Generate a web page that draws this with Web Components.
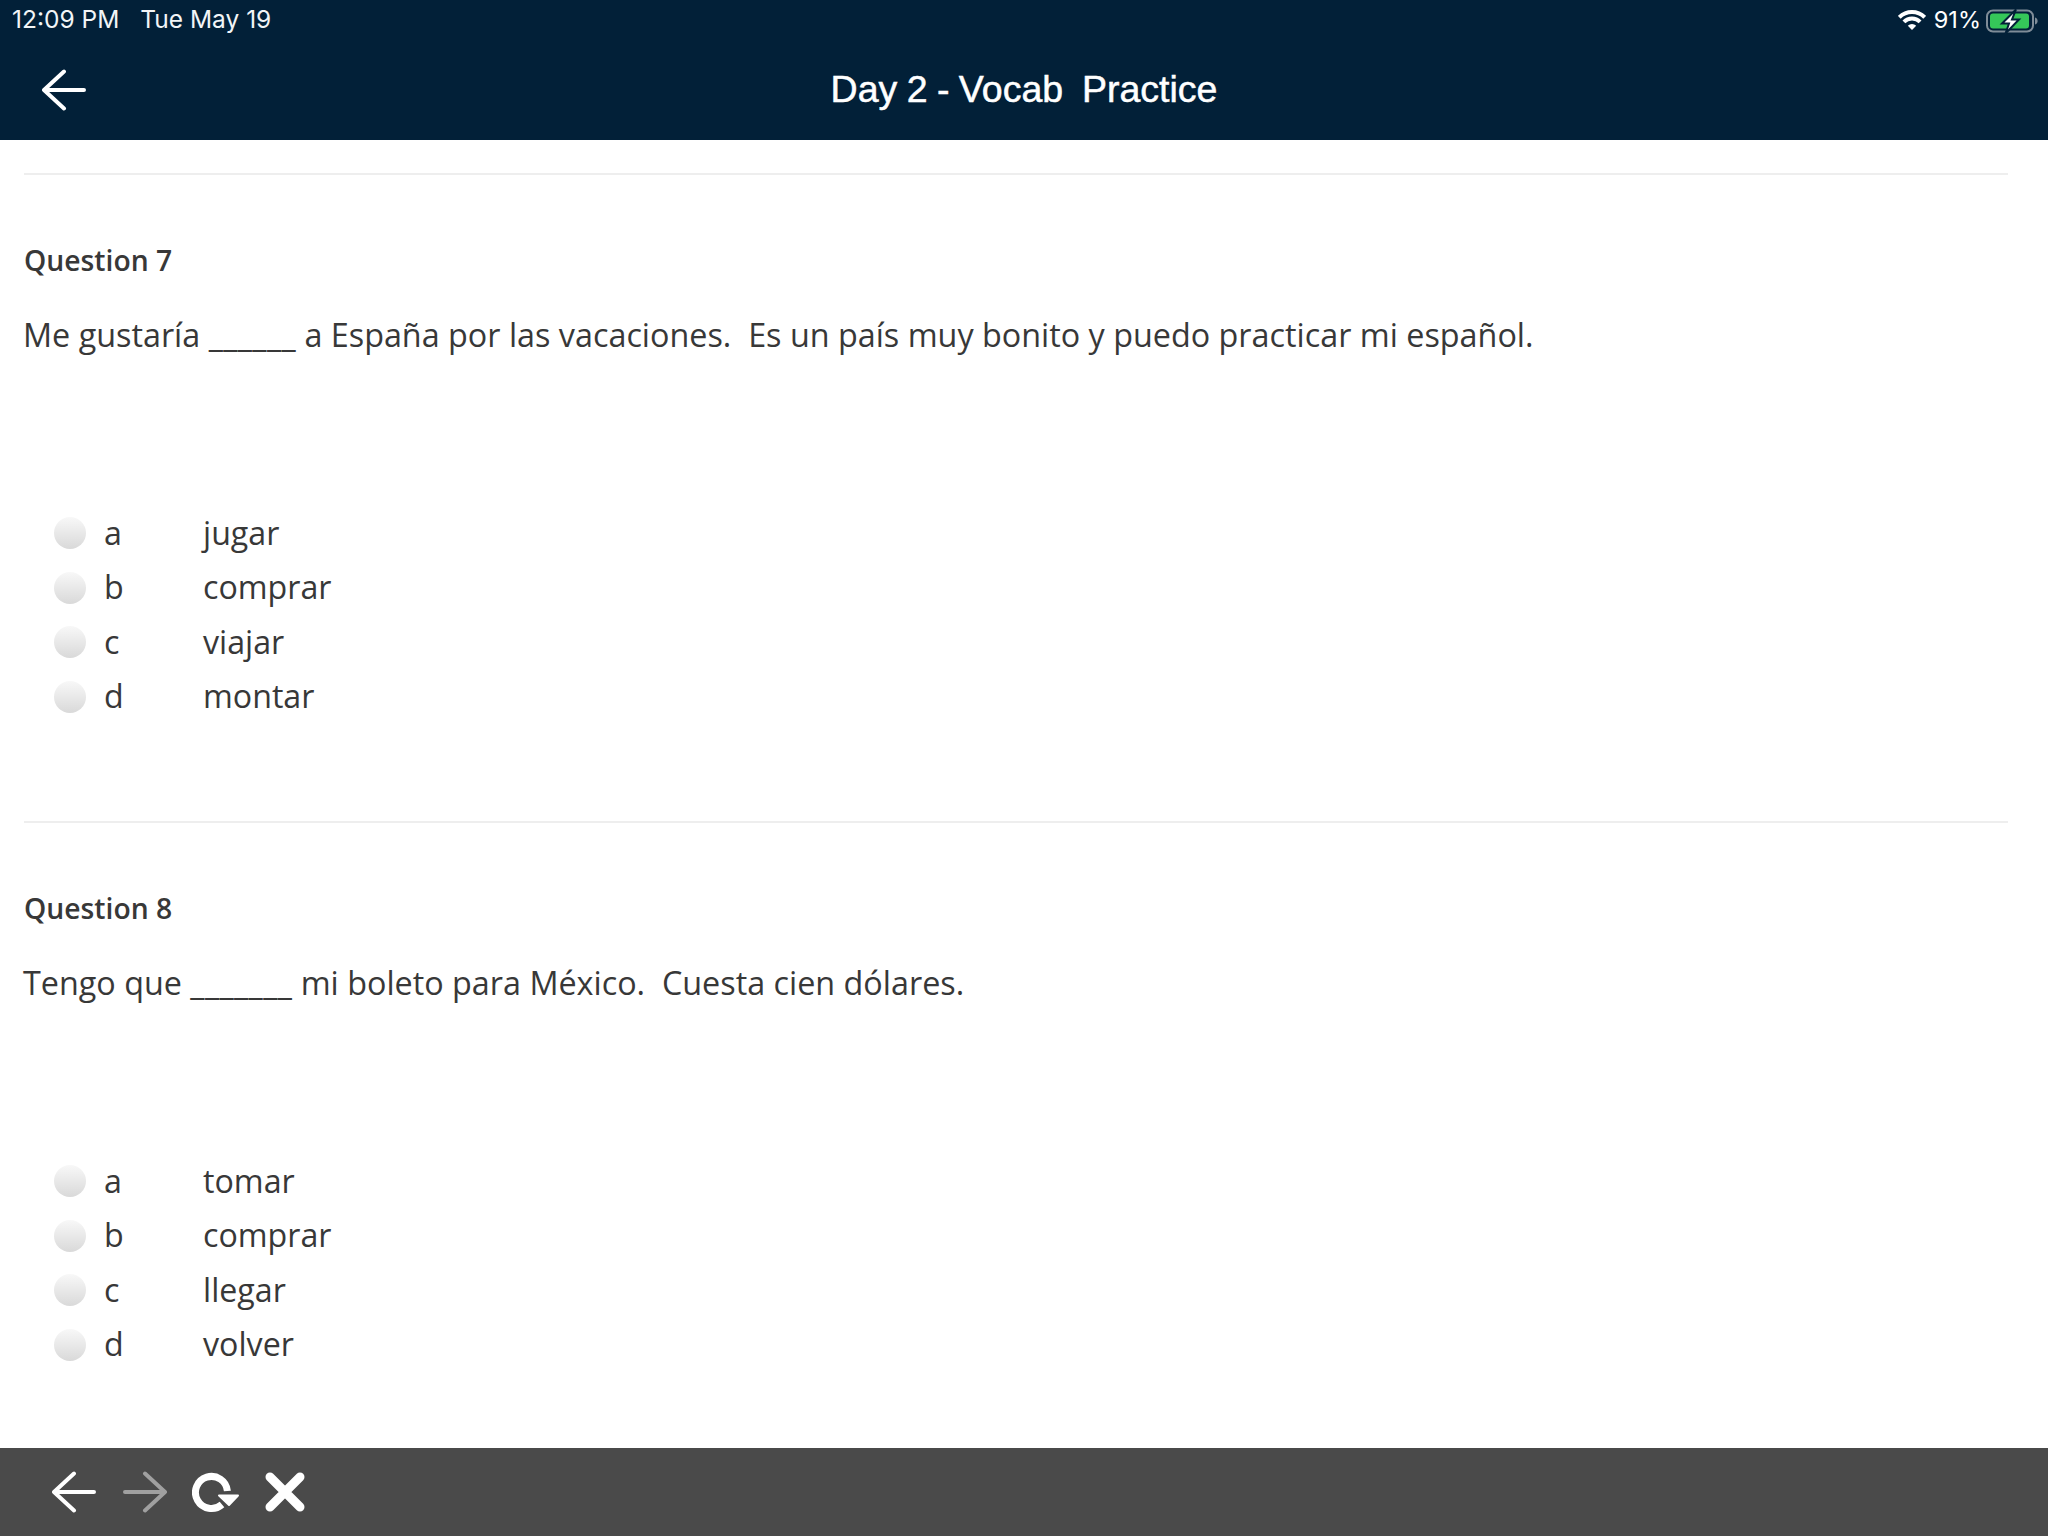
<!DOCTYPE html>
<html lang="es">
<head>
<meta charset="utf-8">
<title>Day 2 - Vocab Practice</title>
<style>
  html, body { margin: 0; height: 100%; background: #fff; }
  body { display: flex; flex-direction: column; height: 1536px; overflow: hidden; font-family: "Open Sans", sans-serif; color: #383838; }
  .content { flex: 1; min-height: 0; padding: 33px 40px 0 24px; }
</style>
</head>
<body>
<app-header heading="Day 2 - Vocab  Practice"></app-header>
<div class="content">
  <quiz-question label="Question 7" text="Me gustaría ______ a España por las vacaciones.  Es un país muy bonito y puedo practicar mi español.">
    <quiz-option key="a">jugar</quiz-option>
    <quiz-option key="b">comprar</quiz-option>
    <quiz-option key="c">viajar</quiz-option>
    <quiz-option key="d">montar</quiz-option>
  </quiz-question>
  <quiz-question label="Question 8" text="Tengo que _______ mi boleto para México.  Cuesta cien dólares.">
    <quiz-option key="a">tomar</quiz-option>
    <quiz-option key="b">comprar</quiz-option>
    <quiz-option key="c">llegar</quiz-option>
    <quiz-option key="d">volver</quiz-option>
  </quiz-question>
</div>
<bottom-bar></bottom-bar>

<script>
class AppHeader extends HTMLElement {
  constructor() {
    super();
    this.attachShadow({ mode: "open" });
  }

  connectedCallback() {
    this.shadowRoot.innerHTML = /* html */ `
      <style>
        :host { display: block; height: 140px; background: #022038; color: #fff; font-family: "Liberation Sans", sans-serif; flex: none; }
        .status { display: flex; align-items: center; justify-content: space-between; height: 38px; padding: 0 10px 0 12px; font-size: 24.5px; font-family: Inter, sans-serif; }
        .status .left { display: flex; gap: 21px; color: #f2f5f7; }
        .status .right { display: flex; align-items: center; gap: 5px; font-size: 23.5px; }
        .wifi { margin-right: 3px; }
        .battery { margin-top: 3px; }
        .bar { display: grid; grid-template-columns: 100px 1fr 100px; align-items: center; height: 103px; }
        .back { padding-left: 42px; display: flex; }
        h1 { margin: 0; text-align: center; font-size: 37.5px; font-weight: 400; word-spacing: -1px; white-space: pre; -webkit-text-stroke: .5px #fff; }
      </style>
      <div class="status">
        <div class="left"><span>12:09 PM</span><span>Tue May 19</span></div>
        <div class="right">
          <svg class="wifi" width="28" height="24" viewBox="0 0 28 24" fill="none" stroke="#fff" stroke-width="4">
            <path d="M1.300 10.300A18 18 0 0 1 26.700 10.300"/>
            <path d="M5.900 14.900A11.500 11.500 0 0 1 22.100 14.900"/>
            <path d="M14 23L9.800 18.800A6 6 0 0 1 18.200 18.800z" fill="#fff" stroke="none"/>
          </svg>
          <span>91%</span>
          <svg class="battery" width="52" height="26" viewBox="0 0 52 26">
            <rect x="1" y="2.500" width="46" height="21" rx="6" fill="none" stroke="#7f8c98" stroke-width="2"/>
            <rect x="4" y="5.500" width="39" height="15" rx="3" fill="#35c759"/>
            <path d="M49 9.500c2 .6 2.600 2 2.600 3.500s-.6 2.900-2.600 3.500z" fill="#7f8c98"/>
            <path d="M30 1.500L16 15.500h7l-3.500 10L33 11.500h-7z" fill="#fff" stroke="#022038" stroke-width="2"/>
          </svg>
        </div>
      </div>
      <div class="bar">
        <div class="back">
          <svg width="44" height="42" viewBox="0 0 44 42" fill="none" stroke="#fff" stroke-width="4" stroke-linecap="round" stroke-linejoin="round">
            <path d="M2 21H42M22 2.500L2 21l20 18.500"/>
          </svg>
        </div>
        <h1>${this.getAttribute("heading")}</h1>
      </div>
    `;
  }
}

class QuizQuestion extends HTMLElement {
  constructor() {
    super();
    this.attachShadow({ mode: "open" });
  }

  connectedCallback() {
    const text = this.getAttribute("text").replace(/_+/, (m) => `<span class="blank">${m}</span>`);
    this.shadowRoot.innerHTML = /* html */ `
      <style>
        :host { display: block; border-top: 2px solid #eee; color: #383838; font-family: "Open Sans", sans-serif; }
        .label { margin-top: 65px; font-size: 28.3px; line-height: 40px; font-weight: 600; }
        .text { margin-top: 32px; font-size: 32.33px; line-height: 44px; white-space: pre-wrap; margin-left: -1px; }
        .blank { letter-spacing: .4px; }
        .options { margin-top: 149px; margin-bottom: 98px; }
      </style>
      <div class="label">${this.getAttribute("label")}</div>
      <div class="text">${text}</div>
      <div class="options"><slot></slot></div>
    `;
  }
}

class QuizOption extends HTMLElement {
  constructor() {
    super();
    this.attachShadow({ mode: "open" });
  }

  connectedCallback() {
    this.shadowRoot.innerHTML = /* html */ `
      <style>
        :host { display: flex; align-items: center; height: 54.5px; font-size: 32.2px; }
        .radio { width: 32px; height: 32px; margin: 2px 0 0 30px; border-radius: 50%; background: linear-gradient(#f8f8f8, #d9d9d9); flex: none; }
        .key { width: 99px; margin-left: 18px; flex: none; }
      </style>
      <span class="radio"></span>
      <span class="key">${this.getAttribute("key")}</span>
      <span><slot></slot></span>
    `;
  }
}

class BottomBar extends HTMLElement {
  constructor() {
    super();
    this.attachShadow({ mode: "open" });
  }

  connectedCallback() {
    this.shadowRoot.innerHTML = /* html */ `
      <style>
        :host { display: flex; align-items: center; gap: 26px; height: 88px; padding-left: 52px; background: #4a4a4a; flex: none; }
        svg { display: block; flex: none; }
        .forward { margin: 0 -1px 0 1px; }
      </style>
      <svg width="44" height="42" viewBox="0 0 44 42" fill="none" stroke="#fff" stroke-width="4" stroke-linecap="round" stroke-linejoin="round">
        <path d="M2 21H42M22 2.500L2 21l20 18.500"/>
      </svg>
      <svg class="forward" width="44" height="42" viewBox="0 0 44 42" fill="none" stroke="#a0a0a0" stroke-width="4" stroke-linecap="round" stroke-linejoin="round">
        <path d="M2 21H42M22 2.500L42 21L22 39.500"/>
      </svg>
      <svg width="47" height="42" viewBox="0 0 47 42">
        <path d="M30 33.500A16 16 0 1 1 35.400 20" fill="none" stroke="#fff" stroke-width="7"/>
        <path d="M27 24.500H46L37 34z" fill="#fff" stroke="#fff" stroke-width="2" stroke-linejoin="round"/>
      </svg>
      <svg width="40" height="40" viewBox="0 0 40 40" fill="none" stroke="#fff" stroke-width="9" stroke-linecap="round">
        <path d="M5 5L35 35M35 5L5 35"/>
      </svg>
    `;
  }
}

customElements.define("app-header", AppHeader);
customElements.define("quiz-question", QuizQuestion);
customElements.define("quiz-option", QuizOption);
customElements.define("bottom-bar", BottomBar);
</script>
</body>
</html>
